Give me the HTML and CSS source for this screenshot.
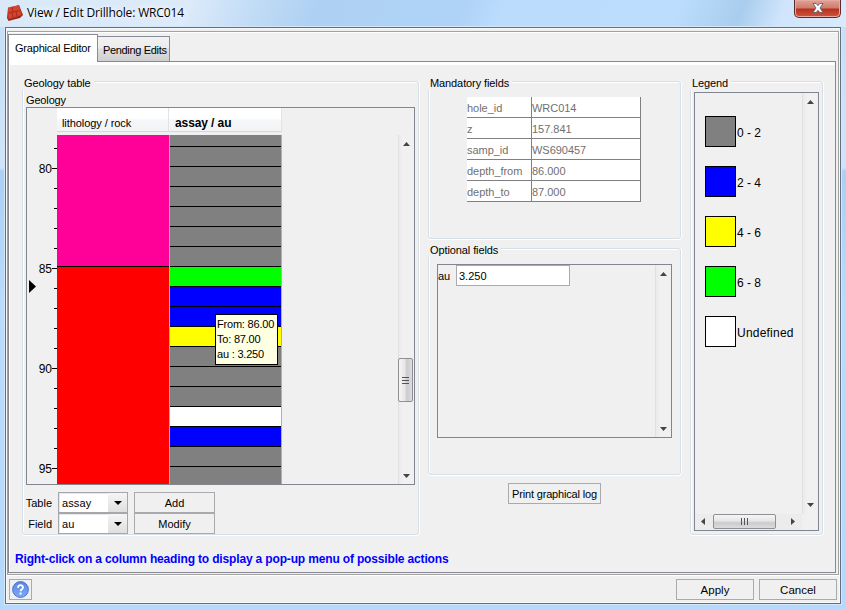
FILE: index.html
```html
<!DOCTYPE html>
<html lang="en">
<head>
<meta charset="utf-8">
<title>View / Edit Drillhole: WRC014</title>
<link rel="stylesheet" href="styles.css">
</head>
<body>
<header class="titlebar">
  <svg class="app-icon" width="17" height="16" viewBox="0 0 17 16"><path d="M1 3L12 0L16 10L13 13L1.500 16L0 13Z" fill="#9c2a1c"/><path d="M1 2.500L12 .3L14.500 10L1.500 14Z" fill="#d4452f"/><path d="M1.500 8L13 5.500M5 2L6 7M9 6.500L10 11M5 8L6 12.500" stroke="#a82a1b" fill="none"/></svg>
  <h1 class="title">View / Edit Drillhole: WRC014</h1>
  <div class="close"><svg width="12" height="10" viewBox="0 0 12 10"><path d="M1 .5H4.200L6 2.700L7.800 .5H11L8 5L11 9.500H7.800L6 7.300L4.200 9.500H1L4 5Z" fill="#fff" stroke="#58617a" stroke-width=".9"/></svg></div>
</header>
<main class="client">
  <div class="frame">
    <nav class="tabs"><div class="tab active">Graphical Editor</div><div class="tab">Pending Edits</div></nav>
    <div class="pane">
      <div class="groups">
        <section class="group geology">
          <h2 class="group-title">Geology table</h2>
          <div class="sub-label">Geology</div>
          <div class="log">
            <div></div><div class="head">lithology / rock</div><div class="head bold">assay / au</div><div></div><div></div>
            <div class="axis">
              <div class="tick"></div><div class="tick major">80</div><div class="tick"></div><div class="tick"></div><div class="tick"></div><div class="tick"></div><div class="tick major">85</div><div class="tick"></div><div class="tick"></div><div class="tick"></div><div class="tick"></div><div class="tick major">90</div><div class="tick"></div><div class="tick"></div><div class="tick"></div><div class="tick"></div><div class="tick major">95</div>
              <svg class="marker" width="7" height="13"><path d="M0 0L7 6.500L0 13Z"/></svg>
            </div>
            <div class="lithology"><div class="pink"></div><div class="red"></div></div>
            <div class="assay">
              <div class="band first"></div><div class="band"></div><div class="band"></div><div class="band"></div><div class="band"></div><div class="band"></div><div class="band"></div><div class="band green"></div><div class="band blue"></div><div class="band blue"></div><div class="band yellow"></div><div class="band"></div><div class="band"></div><div class="band"></div><div class="band white"></div><div class="band blue"></div><div class="band"></div><div class="band last"></div>
              <div class="tooltip"><div>From: 86.00</div><div>To: 87.00</div><div>au : 3.250</div></div>
            </div>
            <div></div>
            <div class="vbar">
              <svg width="7" height="4"><path d="M0 4L3.500 0L7 4Z"/></svg>
              <div class="vthumb"><i></i><i></i><i></i></div>
              <svg width="7" height="4"><path d="M0 0L3.500 4L7 0Z"/></svg>
            </div>
          </div>
          <div class="controls">
            <label>Table</label><div class="combo"><span>assay</span><b><svg width="8" height="4"><path d="M0 0H8L4 4Z"/></svg></b></div><button class="btn">Add</button>
            <label>Field</label><div class="combo"><span>au</span><b><svg width="8" height="4"><path d="M0 0H8L4 4Z"/></svg></b></div><button class="btn">Modify</button>
          </div>
        </section>
        <div class="middle">
          <section class="group mandatory">
            <h2 class="group-title">Mandatory fields</h2>
            <div class="fields">
              <div>hole_id</div><div>WRC014</div>
              <div>z</div><div>157.841</div>
              <div>samp_id</div><div>WS690457</div>
              <div>depth_from</div><div>86.000</div>
              <div>depth_to</div><div>87.000</div>
            </div>
          </section>
          <section class="group optional">
            <h2 class="group-title">Optional fields</h2>
            <div class="opt-box">
              <div class="opt-row"><label>au</label><div class="input">3.250</div></div>
              <div class="vbar"><svg width="7" height="4"><path d="M0 4L3.500 0L7 4Z"/></svg><svg width="7" height="4"><path d="M0 0L3.500 4L7 0Z"/></svg></div>
            </div>
          </section>
          <button class="btn print">Print graphical log</button>
        </div>
        <section class="group legend">
          <h2 class="group-title">Legend</h2>
          <div class="legend-box">
            <div class="keys">
              <div class="key"><i class="sw gray"></i><span>0 - 2</span></div>
              <div class="key"><i class="sw blue"></i><span>2 - 4</span></div>
              <div class="key"><i class="sw yellow"></i><span>4 - 6</span></div>
              <div class="key"><i class="sw green"></i><span>6 - 8</span></div>
              <div class="key"><i class="sw white"></i><span class="undef">Undefined</span></div>
            </div>
            <div class="vbar"><svg width="7" height="4"><path d="M0 4L3.500 0L7 4Z"/></svg><svg width="7" height="4"><path d="M0 0L3.500 4L7 0Z"/></svg></div>
            <div class="hbar"><svg width="4" height="7"><path d="M4 0L0 3.500L4 7Z"/></svg><div class="hthumb"><i></i><i></i><i></i></div><svg class="right" width="4" height="7"><path d="M0 0L4 3.500L0 7Z"/></svg></div>
          </div>
        </section>
      </div>
      <p class="hint">Right-click on a column heading to display a pop-up menu of possible actions</p>
    </div>
  </div>
  <footer class="footer">
    <button class="btn help"><svg width="17" height="17" viewBox="0 0 17 17"><defs><linearGradient id="g" x2="0" y2="1"><stop stop-color="#5c86e0"/><stop offset="1" stop-color="#7cabf5"/></linearGradient></defs><circle cx="8.500" cy="8.500" r="7.900" fill="url(#g)" stroke="#4a74cf"/><path d="M6 6.700C6 3.400 11 3.500 11 6.400C11 8.300 8.600 8.200 8.600 10.300" fill="none" stroke="#fff" stroke-width="1.800"/><rect x="7.600" y="11.500" width="2" height="2" fill="#fff"/></svg></button>
    <button class="btn action">Apply</button>
    <button class="btn action">Cancel</button>
  </footer>
</main>
</body>
</html>
```
FILE: styles.css
```css
* { box-sizing: border-box; margin: 0; padding: 0; }
body {
  width: 846px; height: 609px; overflow: hidden;
  font: 11px/14px "Liberation Sans", Arial, sans-serif; color: #000;
  background: linear-gradient(#c4dff8 0, #cfe4f9 168px, #a9d0f5 171px, #b9dbfd 300px, #b5d9fc 100%);
}
svg { display: block; flex: none; }
.titlebar {
  height: 27px; display: flex; padding: 4px 5px 0 7px;
  background: linear-gradient(110deg, #d9e9f8 0, #dceafa 180px, #c0dbf5 245px, #aed1f3 300px, #afd3f6 440px, #bbdcfd 475px, #bcddfd 640px, #a9cdee 700px, #d0e5fb 740px, #d9eafc 100%);
}
.app-icon { margin-top: 1px; }
.title { font: 12px/18px "Open Sans", sans-serif; margin-left: 3px; letter-spacing: -.15px; text-shadow: 0 0 6px #fff, 0 0 6px #fff; }
.close {
  margin: -4px 0 0 auto; width: 47px; height: 18px; display: flex; align-items: center; justify-content: center;
  border: 1px solid #5a2b2c; border-top: 0; border-radius: 0 0 5px 5px; box-shadow: inset 0 0 0 1px #e9a99d;
  background: linear-gradient(#dba598 0, #d07b6b 8px, #b8301c 9px, #d0553c 100%);
}
.close svg { margin: -2px 0 0 1px; }
.client { margin: 0 5px 5px; height: 577px; border: 1px solid #5f6f80; background: #f0f0f0; box-shadow: inset 0 0 0 1px #f8f8f8, 0 0 0 1px #d5e8fa; overflow: hidden; }
.frame { margin: 3px 1px 0; height: 544px; border: 1px solid #a2a2a2; padding: 2px 2px 1px 0; box-shadow: inset 0 1px #fff, 0 1px #fff; }
.tabs { display: flex; align-items: flex-end; height: 27px; }
.tab { height: 25px; width: 72px; border: 1px solid #888c96; border-left: 0; border-bottom: 0; padding: 6px 0 0 5px; letter-spacing: -.33px; white-space: nowrap; background: linear-gradient(#f2f2f2, #ececec 45%, #dedede 50%, #cfcfcf); }
.tab.active { width: 90px; height: 28px; margin-bottom: -1px; padding: 6px 0 0 6px; letter-spacing: -.2px; border-left: 1px solid #888c96; background: #fff; position: relative; }
.pane { height: 512px; border: 1px solid #888894; box-shadow: inset 1px 3px #fff; padding: 19px 0 0 13px; }
.groups { display: grid; grid-template-columns: 397px 253px 133px; column-gap: 9px; height: 454px; }
.group { border: 1px solid #d5dfe5; border-radius: 3px; box-shadow: inset 1px 1px #fff, 0 1px #fff, 1px 0 #fff; }
.group-title { font: inherit; width: max-content; height: 14px; margin: -6px 0 0 -1px; padding: 0 3px 0 2px; background: #f0f0f0; letter-spacing: -.1px; white-space: nowrap; }
.sub-label { margin: 3px 0 0 3px; height: 14px; letter-spacing: -.15px; }
.log { margin-left: 3px; width: 389px; height: 378px; border: 1px solid #808590; display: grid; grid-template: 27px 349px / 30px 112px 113px 116px 16px; }
.head { height: 24px; padding: 8px 0 0 5px; border-right: 1px solid #e2e3e5; border-bottom: 1px solid #d5d7da; background: linear-gradient(#fff 0, #fff 10px, #f6f7f9 12px, #f2f3f5); letter-spacing: -.07px; }
.head.bold { font-size: 12px; font-weight: bold; padding-left: 6px; letter-spacing: -.1px; }
.axis { position: relative; padding-top: 3px; }
.tick { height: 20px; display: flex; align-items: center; justify-content: flex-end; font-size: 12px; }
.tick::after { content: ""; width: 3px; height: 1px; background: #000; margin-top: 1px; }
.tick.major { padding-top: 1px; }
.tick.major::after { width: 5px; margin-top: 0; }
.marker { position: absolute; left: 2px; top: 145px; }
.pink { height: 131px; background: #ff0098; }
.red { height: 218px; background: #f00; border-top: 1px solid #000; }
.assay { position: relative; border-left: 1px solid #b0b0b0; border-right: 1px solid #b0b0b0; }
.band { height: 20px; border-top: 1px solid #000; background: #808080; }
.band.first { height: 11px; border-top: 0; }
.band.last { height: 18px; }
.green { background: #0f0; } .blue { background: #00f; } .yellow { background: #ff0; } .white { background: #fff; } .gray { background: #808080; }
.tooltip { position: absolute; left: 45px; top: 179px; width: 63px; height: 51px; padding: 2px 0 0 1px; border: 1px solid #000; background: #ffffe1; line-height: 15px; letter-spacing: -.2px; white-space: nowrap; }
.vbar { border-left: 1px solid #e0e0e0; background: linear-gradient(90deg, #ebebeb, #f1f1f1 30%, #f0f0f0); display: flex; flex-direction: column; align-items: center; justify-content: space-between; padding: 7px 0 6px; }
.vbar svg, .hbar svg { fill: #444; }
.log .vbar { display: grid; grid-template-rows: 4px 1fr 4px; justify-items: center; }
.vthumb { width: 15px; height: 44px; margin-top: 212px; margin-left: -1px; border: 1px solid #8f8f94; border-radius: 2px; background: linear-gradient(90deg, #f5f5f5, #e6e6e6 45%, #cbcbd0 60%, #dcdcdc); display: flex; flex-direction: column; align-items: center; justify-content: center; gap: 2px; align-self: start; }
.vthumb i { width: 7px; height: 1px; background: #555; }
.controls { display: grid; grid-template: 21px 21px / 32px 70px 81px; column-gap: 6px; margin: 7px 0 0 -3px; }
.controls label { text-align: right; line-height: 23px; }
.combo { border: 1px solid #a5a7ad; background: #fff; display: flex; line-height: 21px; padding-left: 3px; box-shadow: inset 1px 1px #e8e8e8; }
.combo span { flex: 1; letter-spacing: .1px; }
.combo b { width: 19px; background: linear-gradient(#f5f5f5, #dfdfdf); display: flex; align-items: center; justify-content: center; }
.btn { font: inherit; color: #000; text-align: center; border: 1px solid #a9a9ae; background: #f0f0f0; display: block; white-space: nowrap; padding-top: 1px; }
.middle { display: flex; flex-direction: column; }
.mandatory { height: 158px; }
.optional { height: 227px; margin-top: 9px; }
.fields { margin: 7px 0 0 38px; width: 174px; display: grid; grid-template-columns: 65px 109px; color: #707070; background: #fff; }
.fields div { height: 21px; padding-top: 4px; border-right: 1px solid #808080; border-bottom: 1px solid #808080; letter-spacing: -.03px; }
.opt-box { margin: 7px 0 0 8px; width: 235px; height: 174px; border: 1px solid #808590; display: flex; justify-content: space-between; }
.opt-row { display: flex; line-height: 22px; }
.opt-row label { width: 18px; }
.input { width: 114px; height: 21px; line-height: 20px; border: 1px solid #a9a9ae; padding-left: 2px; background: #fff; }
.opt-box .vbar { width: 16px; }
.print { width: 93px; height: 21px; margin: 8px 0 0 80px; letter-spacing: -.17px; }
.legend-box { margin: 2px 0 0 3px; width: 125px; height: 439px; border: 1px solid #808590; display: grid; grid-template: 421px 16px / 107px 16px; }
.keys { padding: 23px 0 0 10px; }
.key { height: 31px; margin-bottom: 19px; display: flex; align-items: center; font-size: 12px; gap: 1px; }
.key span { padding-top: 2px; }
.key .undef { letter-spacing: .22px; }
.sw { width: 31px; height: 31px; border: 1px solid #000; }
.legend-box .vbar { padding: 7px 0 7px; }
.hbar { display: flex; align-items: center; padding: 0 0 2px 6px; background: #ececec; }
.hthumb { width: 63px; height: 15px; margin-left: 8px; border: 1px solid #8f8f94; border-radius: 2px; background: linear-gradient(#f5f5f5, #e6e6e6 45%, #cbcbd0 60%, #dcdcdc); display: flex; align-items: center; justify-content: center; gap: 2px; }
.hthumb i { width: 1px; height: 7px; background: #555; }
.hbar .right { margin-left: 15px; }
.hint { margin: 16px 0 0 -7px; font-size: 12px; font-weight: bold; line-height: 16px; letter-spacing: -.157px; color: #00f; white-space: nowrap; }
.footer { display: flex; padding: 4px 3px 0; gap: 5px; }
.footer .btn { height: 21px; }
.help { width: 23px; margin-right: auto; }
.help svg { margin: -1px auto 0; }
.action { width: 78px; font-size: 11.5px; }
```
